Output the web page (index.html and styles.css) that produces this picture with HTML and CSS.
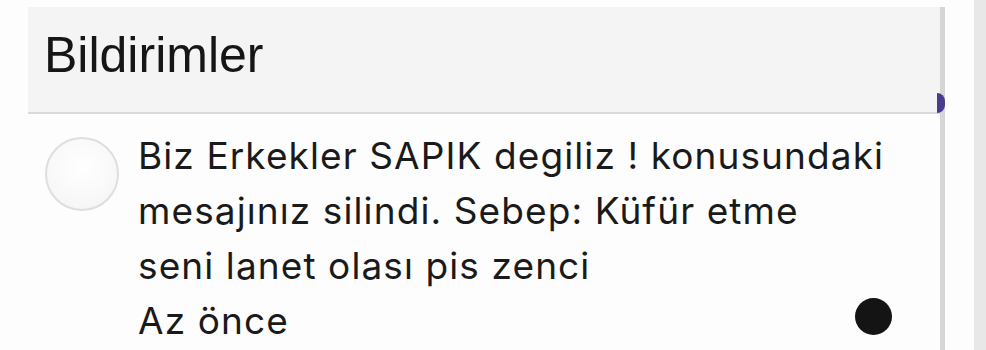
FILE: index.html
```html
<!DOCTYPE html>
<html lang="tr">
<head>
  <meta charset="UTF-8">
  <meta name="viewport" content="width=device-width, initial-scale=1.0">
  <title>Bildirimler</title>
  <link rel="stylesheet" href="styles.css">
</head>
<body>
  <div class="screen">
    <div class="panel">
      <div class="panel-header">
        <h1>Bildirimler</h1>
      </div>
      <div class="notification">
        <div class="avatar"></div>
        <div class="notification-body">
          <p class="message">Biz Erkekler SAPIK degiliz ! konusundaki<br>mesajınız silindi. Sebep: Küfür etme<br>seni lanet olası pis zenci</p>
          <div class="meta">
            <span class="time">Az önce</span>
            <span class="unread"></span>
          </div>
        </div>
      </div>
    </div>
    <div class="scrollbar">
      <span class="peek"></span>
    </div>
    <div class="gutter"></div>
    <div class="edge"></div>
  </div>
</body>
</html>
```

FILE: styles.css
```css
body {
  margin: 0;
  background-color: #fdfdfd;
  color: #1a1a1a;
  font-family: Inter, "Liberation Sans", sans-serif;
}

.screen {
  display: flex;
  height: 350px;
  overflow: hidden;
}

.panel {
  width: 912px;
  margin-left: 28px;
  margin-top: 7px;
}

.panel-header {
  height: 107px;
  background-color: #f4f4f4;
  border-bottom: 2px solid #dadada;
  box-sizing: border-box;
  padding: 23px 0 0 16px;
}

.panel-header h1 {
  margin: 0;
  font-family: "Liberation Sans", Arial, sans-serif;
  font-weight: normal;
  font-size: 50px;
  line-height: 1;
  color: #161616;
}

.notification {
  display: flex;
  gap: 19px;
  padding: 14px 0 0 17px;
}

.avatar {
  flex: none;
  width: 70px;
  height: 70px;
  margin-top: 9px;
  border: 2px solid #dedede;
  border-radius: 50%;
  background: radial-gradient(circle at 50% 40%, #ffffff 0%, #f7f7f7 70%, #efefef 100%);
}

.notification-body {
  flex: 1;
  padding-right: 48px;
}

.message {
  margin: 0;
  font-size: 37px;
  line-height: 55px;
  letter-spacing: 1.1px;
}

.meta {
  display: flex;
  justify-content: space-between;
  align-items: center;
  height: 55px;
  font-size: 37px;
  letter-spacing: 1.1px;
}

.unread {
  width: 37px;
  height: 37px;
  margin-top: -8px;
  border-radius: 50%;
  background-color: #141414;
}

.scrollbar {
  position: relative;
  width: 5px;
  margin-top: 7px;
  background-color: #d6d6d6;
}

.peek {
  position: absolute;
  top: 86px;
  left: -3px;
  width: 8px;
  height: 20px;
  border-radius: 0 10px 10px 0;
  background-color: #4b3b8e;
}

.gutter {
  width: 29px;
}

.edge {
  flex: 1;
  background-color: #e8e8e8;
}
```
